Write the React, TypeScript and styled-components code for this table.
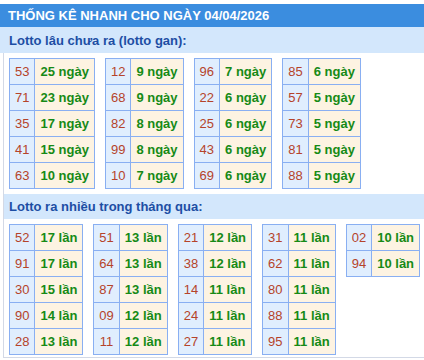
import React from "react";
import styled, { createGlobalStyle } from "styled-components";

const GlobalStyle = createGlobalStyle`
  html, body {
    margin: 0;
    padding: 0;
    background: #ffffff;
    font-family: "Liberation Sans", Arial, sans-serif;
  }
`;

const ganData: [string, string][][] = [
  [["53", "25"], ["71", "23"], ["35", "17"], ["41", "15"], ["63", "10"]],
  [["12", "9"], ["68", "9"], ["82", "8"], ["99", "8"], ["10", "7"]],
  [["96", "7"], ["22", "6"], ["25", "6"], ["43", "6"], ["69", "6"]],
  [["85", "6"], ["57", "5"], ["73", "5"], ["81", "5"], ["88", "5"]],
];

const hotData: [string, string][][] = [
  [["52", "17"], ["91", "17"], ["30", "15"], ["90", "14"], ["28", "13"]],
  [["51", "13"], ["64", "13"], ["87", "13"], ["09", "12"], ["11", "12"]],
  [["21", "12"], ["38", "12"], ["14", "11"], ["24", "11"], ["27", "11"]],
  [["31", "11"], ["62", "11"], ["80", "11"], ["88", "11"], ["95", "11"]],
  [["02", "10"], ["94", "10"]],
];

const Page = styled.div`
  width: 424px;
  padding-top: 4px;
`;

const Header = styled.div`
  height: 23px;
  background: #3b8ddf;
  color: #ffffff;
  font-size: 13px;
  font-weight: bold;
  display: flex;
  align-items: center;
  padding-left: 8px;
`;

const SectionTitle = styled.div<{ $indent: number }>`
  height: ${(p) => (p.$indent > 6 ? 26 : 25)}px;
  background: #d3e7fc;
  color: #1d4ea4;
  font-size: 13px;
  font-weight: bold;
  display: flex;
  align-items: center;
  padding-left: ${(p) => p.$indent}px;
`;

const Body = styled.div`
  margin-left: 3px;
  border-left: 1px solid #d3d9e6;
  border-bottom: 1px solid #d3d9e6;
  padding-bottom: 2px;
`;

const Grid = styled.div<{ $top: number; $bottom: number }>`
  display: flex;
  align-items: flex-start;
  gap: 10px;
  padding: ${(p) => p.$top}px 0 ${(p) => p.$bottom}px 5px;
`;

const StatTable = styled.table`
  border-collapse: collapse;
  font-size: 13px;
`;

const NumCell = styled.td`
  height: 25px;
  padding: 0 5px;
  border: 1px solid #89aff2;
  background: #e0eefe;
  color: #b5432a;
  text-align: center;
  vertical-align: middle;
`;

const ValCell = styled.td`
  height: 25px;
  padding: 0 5px;
  border: 1px solid #89aff2;
  background: #fdf3e2;
  color: #168a16;
  font-weight: bold;
  white-space: nowrap;
  vertical-align: middle;
`;

function Block({ rows, unit }: { rows: [string, string][]; unit: string }) {
  return (
    <StatTable>
      <tbody>
        {rows.map(([num, count]) => (
          <tr key={num}>
            <NumCell>{num}</NumCell>
            <ValCell>
              {count} {unit}
            </ValCell>
          </tr>
        ))}
      </tbody>
    </StatTable>
  );
}

export default function App() {
  return (
    <Page>
      <GlobalStyle />
      <Header>THỐNG KÊ NHANH CHO NGÀY 04/04/2026</Header>
      <SectionTitle $indent={9}>Lotto lâu chưa ra (lotto gan):</SectionTitle>
      <Body>
        <Grid $top={5} $bottom={5}>
          {ganData.map((rows, i) => (
            <Block key={i} rows={rows} unit="ngày" />
          ))}
        </Grid>
        <SectionTitle $indent={5}>Lotto ra nhiều trong tháng qua:</SectionTitle>
        <Grid $top={5} $bottom={0}>
          {hotData.map((rows, i) => (
            <Block key={i} rows={rows} unit="lần" />
          ))}
        </Grid>
      </Body>
    </Page>
  );
}
